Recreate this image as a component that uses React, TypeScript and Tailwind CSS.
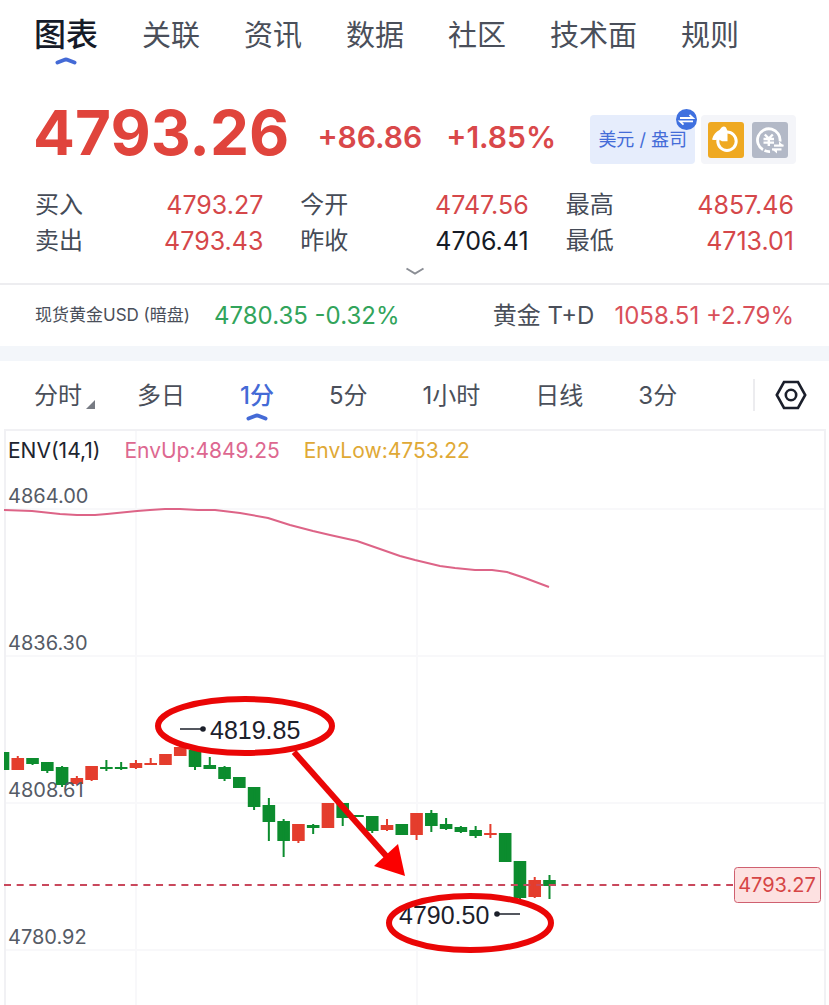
import React, { useState } from 'react'

type Candle = [open: number, close: number, high: number, low: number]

interface QuoteProps {
    label: string
    value: string
    flat?: boolean
}

const TABS = ['图表', '关联', '资讯', '数据', '社区', '技术面', '规则']
const PERIODS = ['分时', '多日', '1分', '5分', '1小时', '日线', '3分']

const QUOTES: QuoteProps[] = [
    { label: '买入', value: '4793.27' },
    { label: '今开', value: '4747.56' },
    { label: '最高', value: '4857.46' },
    { label: '卖出', value: '4793.43' },
    { label: '昨收', value: '4706.41', flat: true },
    { label: '最低', value: '4713.01' },
]

// chart units, y grows downwards, so open < close is a falling candle
const CANDLES: Candle[] = [
    [323, 341, 323, 341], [341, 329, 327, 341], [329, 335, 329, 336], [333, 342, 333, 344],
    [338, 356, 337, 358], [355, 349, 347, 356], [351, 337, 337, 352], [338, 340, 331, 342],
    [338, 340, 333, 341], [339, 334, 331, 340], [336, 334, 329, 336], [336, 325, 325, 336],
    [327, 318, 316, 327], [321, 338, 321, 341], [336, 340, 328, 340], [338, 350, 337, 352],
    [348, 359, 348, 359], [358, 378, 358, 381], [376, 393, 369, 412], [392, 412, 390, 428],
    [412, 395, 395, 414], [396, 399, 395, 405], [399, 374, 374, 399], [374, 389, 374, 397],
    [386, 388, 386, 388], [387, 402, 387, 404], [401, 396, 390, 402], [395, 406, 395, 406],
    [406, 384, 384, 411], [384, 397, 381, 403], [395, 400, 389, 401], [398, 403, 397, 404],
    [401, 407, 397, 409], [406, 404, 395, 409], [404, 433, 404, 433], [432, 469, 432, 470],
    [468, 451, 448, 469], [451, 457, 446, 470],
]

const ENV_UP =
    '4,81 32,82 60,85 77,86 95,86 107,85 137,82 150,81 165,80 180,80 198,81 215,81 240,84 268,89 290,96 313,102 330,106 357,112 380,120 400,127 415,131 440,137 455,139 475,141 492,141 507,143 525,149 549,158'

const AXIS = [
    { y: 80, text: '4864.00' },
    { y: 227, text: '4836.30' },
    { y: 374, text: '4808.61' },
    { y: 521, text: '4780.92' },
]

function ActiveMark() {
    return (
        <svg className="absolute top-full left-1/2 h-2 w-[22px] -translate-x-1/2" viewBox="0 0 22 8" fill="none">
            <path d="M2.5 5.5 L9 3 Q11 2.2 13 3 L19.5 5.5" stroke="#446ad6" strokeWidth="4" strokeLinecap="round" />
        </svg>
    )
}

function Quote({ label, value, flat }: QuoteProps) {
    return (
        <div className="flex justify-between">
            <dt className="text-[24px] text-[#454b57]">{label}</dt>
            <dd className={flat ? 'text-[#161b26]' : 'text-[#d5474a]'}>{value}</dd>
        </div>
    )
}

function TurnIcon() {
    return (
        <svg className="size-9" viewBox="0 0 36 36" fill="none">
            <rect width="36" height="36" rx="3" fill="#efa922" />
            <circle cx="19" cy="19.2" r="9.2" stroke="#fff" strokeWidth="3" />
            <path d="M4 17.5 C5.5 12.5 8 9.5 11.5 8 L13.5 5.5 Q16 3.5 18 5.5 L19.5 9 V19.2 H14 L11 17.6 Q7 18.6 4 17.5 Z" fill="#fff" />
        </svg>
    )
}

function CurrencyIcon() {
    return (
        <svg className="size-9" viewBox="0 0 36 36" fill="none" stroke="#fff" strokeWidth="2.8">
            <rect width="36" height="36" rx="3" fill="#b3b9c7" stroke="none" />
            <path d="M28 19.5 A11.3 11.3 0 1 0 11 27.8" />
            <path d="M12.5 28.6 A11.3 11.3 0 0 0 18 29.6" />
            <path d="M12.8 12.5 L16.8 16.5 L20.8 12.5 M16.8 16 V24 M11.5 17 H22 M11.5 20.6 H22" strokeWidth="2.4" />
            <path d="M22 23.6 H31.5" strokeWidth="2.2" />
            <path d="M27 19.5 L31.8 24 H27 Z" fill="#fff" stroke="none" />
            <path d="M20 27.4 H29.5" strokeWidth="2.2" />
            <path d="M25 31.4 L19.8 27 H25 Z" fill="#fff" stroke="none" />
        </svg>
    )
}

function CandleChart() {
    return (
        <svg className="block w-full" viewBox="0 0 829 576" role="img" aria-label="1分 K线图">
            <g stroke="#f8f8fa" strokeWidth="2">
                {AXIS.map((a) => (
                    <path key={a.text} d={`M4 ${a.y} H825`} />
                ))}
                <path d="M136 0 V576 M417 0 V576" />
            </g>
            <path d="M5 576 V1 H825 V576" fill="none" stroke="#f1f1f4" strokeWidth="2" />

            <polyline points={ENV_UP} fill="none" stroke="#dd6487" strokeWidth="2" strokeLinejoin="round" />

            {CANDLES.map(([open, close, high, low], i) => {
                const x = 3 + i * 14.77
                const left = Math.max(4, x - 6.3)
                return (
                    <g key={i} fill={close > open ? '#0c8c2e' : '#e43d2d'}>
                        <rect x={left} y={Math.min(open, close)} width={x + 6.3 - left} height={Math.abs(open - close)} />
                        {i > 0 && <rect x={x - 1} y={high} width="2" height={low - high} />}
                    </g>
                )
            })}

            <g className="text-[20px]" fill="#555b66">
                {AXIS.map((a) => (
                    <text key={a.text} x="8" y={a.y - 6}>{a.text}</text>
                ))}
            </g>

            <path d="M4 456 H733" stroke="#c9485c" strokeWidth="2" strokeDasharray="7 5.67" />
            <rect x="734.5" y="438.5" width="86" height="35" rx="3" fill="#fde1e1" stroke="#cf6070" />
            <text className="text-[20px]" x="777" y="463" textAnchor="middle" fill="#d64545">4793.27</text>

            <g className="font-['Liberation_Sans',sans-serif] text-[25px]" fill="#1c202b" stroke="none">
                <text x="210" y="310">4819.85</text>
                <text x="399" y="495">4790.50</text>
                <circle cx="203" cy="300" r="2.8" />
                <circle cx="497" cy="485" r="2.8" />
            </g>
            <path d="M180 300 H203 M497 485 H520" stroke="#1c202b" strokeWidth="1.4" />

            {/* hand-drawn marks */}
            <g fill="none" stroke="#ea0606" strokeWidth="6">
                <ellipse cx="245" cy="297" rx="87" ry="27" />
                <ellipse cx="470" cy="494" rx="81" ry="27" />
                <path d="M294 323 L388 429" />
            </g>
            <path d="M405 447 L398 415 L374 437 Z" fill="#fb0000" />
        </svg>
    )
}

export default function App() {
    const [tab, setTab] = useState('图表')
    const [period, setPeriod] = useState('1分')

    return (
        <main className="overflow-hidden bg-white font-['Inter','Noto_Sans_CJK_SC',sans-serif] text-[#4a4f5a]">
            <nav className="flex items-baseline gap-11 px-[34px] pt-[13px] whitespace-nowrap">
                {TABS.map((t) => (
                    <button
                        key={t}
                        onClick={() => setTab(t)}
                        className={t === tab
                            ? 'relative cursor-pointer text-[32px] leading-[44px] font-medium text-[#161b28]'
                            : 'relative cursor-pointer text-[29px] leading-[44px]'}
                    >
                        {t}
                        {t === tab && <ActiveMark />}
                    </button>
                ))}
            </nav>

            <section className="flex items-start pt-[57px] pr-[33px] pl-[33px] whitespace-nowrap">
                <div className="text-[62px] leading-9 font-bold text-[#e0443c]">4793.26</div>
                <div className="ml-7 flex gap-6 text-[30px] leading-11 font-semibold text-[#d9484a]">
                    <span>+86.86</span>
                    <span>+1.85%</span>
                </div>
                <div className="ml-auto flex gap-1.5">
                    <button className="relative h-[49px] cursor-pointer rounded bg-[#e6edfc] px-2 text-[18px] text-[#446cd8]">
                        美元 / 盎司
                        <svg className="absolute -top-1.5 -right-0.5 size-[21px]" viewBox="0 0 21 21" fill="none">
                            <circle cx="10.5" cy="10.5" r="10.5" fill="#3f70df" />
                            <path d="M4 9 H17 L13.5 5.8 M17 12.4 H4 L7.5 15.6" stroke="#fff" strokeWidth="1.8" />
                        </svg>
                    </button>
                    <div className="flex h-[49px] items-center gap-2 rounded bg-[#f4f5f9] pr-2 pl-[7px]">
                        <button aria-label="转换" className="cursor-pointer"><TurnIcon /></button>
                        <button aria-label="币种" className="cursor-pointer"><CurrencyIcon /></button>
                    </div>
                </div>
            </section>

            <dl className="grid grid-cols-3 gap-x-[37px] px-[35px] pt-[23px] text-[25px] leading-9">
                {QUOTES.map((q) => (
                    <Quote key={q.label} {...q} />
                ))}
            </dl>
            <button aria-label="展开" className="mx-auto flex h-6 w-10 cursor-pointer items-center justify-center">
                <svg className="h-2 w-5" viewBox="0 0 20 8" fill="none">
                    <path d="M1.5 1.5 L10 6.5 L18.5 1.5" stroke="#8b8e95" strokeWidth="2" />
                </svg>
            </button>

            <section className="flex h-[63px] items-center justify-between border-t-2 border-[#ededf0] px-[35px] text-[24px] whitespace-nowrap">
                <div className="flex items-center gap-6">
                    <span className="text-[17px]">现货黄金USD (暗盘)</span>
                    <span className="text-[#32a45b]">4780.35 -0.32%</span>
                </div>
                <div className="flex items-center gap-5">
                    <span>黄金 T+D</span>
                    <span className="text-[#d9505a]">1058.51 +2.79%</span>
                </div>
            </section>
            <div className="h-[15px] bg-[#f3f6fa]" />

            <div className="flex h-[68px] items-center justify-between pr-[22px] pl-[34px] whitespace-nowrap">
                <div className="flex gap-[55px] pt-0.5 text-[24px] leading-[34px]">
                    {PERIODS.map((p) => (
                        <button
                            key={p}
                            onClick={() => setPeriod(p)}
                            className={p === period ? 'relative cursor-pointer font-medium text-[#446ad6]' : 'relative cursor-pointer'}
                        >
                            {p}
                            {p === '分时' && (
                                <svg className="absolute right-[-13px] bottom-1 size-[9px]" viewBox="0 0 9 9">
                                    <path d="M9 0 V9 H0 Z" fill="#777b83" />
                                </svg>
                            )}
                            {p === period && <ActiveMark />}
                        </button>
                    ))}
                </div>
                <button aria-label="设置" className="cursor-pointer border-l-2 border-[#ececef] pl-5">
                    <svg className="size-8" viewBox="0 0 32 32" fill="none" stroke="#1b1f2b" strokeWidth="2.6">
                        <path d="M1.8 16 L9 3 H23 L30.2 16 L23 29 H9 Z" />
                        <circle cx="16" cy="16" r="5.2" />
                    </svg>
                </button>
            </div>

            <section className="relative">
                <div className="absolute top-2 left-2 flex gap-6 text-[21px] leading-7 whitespace-nowrap">
                    <span className="text-[#20242e]">ENV(14,1)</span>
                    <span className="text-[#dd6890]">EnvUp:4849.25</span>
                    <span className="text-[#dfa936]">EnvLow:4753.22</span>
                </div>
                <CandleChart />
            </section>
        </main>
    )
}
